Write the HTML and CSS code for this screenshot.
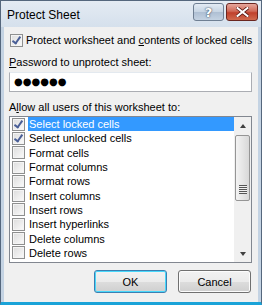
FILE: index.html
```html
<!DOCTYPE html>
<html lang="en">
<head>
    <meta charset="UTF-8">
    <title>Protect Sheet</title>
    <link rel="stylesheet" href="styles.css">
</head>
<body>
    <div class="window">
        <div class="title-bar">
            <span class="title">Protect Sheet</span>
            <div class="caption-buttons">
                <button class="cap-btn help-btn">?</button>
                <button class="cap-btn close-btn">
                    <svg width="13" height="10" viewBox="0 0 13 10">
                        <path d="M1.5 1 L11.5 9 M11.5 1 L1.5 9" stroke="#5a1a14" stroke-width="3.6" stroke-linecap="square"/>
                        <path d="M1.5 1 L11.5 9 M11.5 1 L1.5 9" stroke="#ffffff" stroke-width="2" stroke-linecap="square"/>
                    </svg>
                </button>
            </div>
        </div>
        <div class="content">
            <label class="check-row top-check">
                <span class="box checked"></span>
                <span>Protect worksheet and <u>c</u>ontents of locked cells</span>
            </label>
            <div class="field-label"><u>P</u>assword to unprotect sheet:</div>
            <div class="password">&#9679;&#9679;&#9679;&#9679;&#9679;&#9679;</div>
            <div class="field-label">A<u>l</u>low all users of this worksheet to:</div>
            <div class="listbox">
                <div class="items">
                    <div class="item selected"><span class="box checked"></span><span class="text">Select locked cells</span></div>
                    <div class="item"><span class="box checked"></span><span class="text">Select unlocked cells</span></div>
                    <div class="item"><span class="box"></span><span class="text">Format cells</span></div>
                    <div class="item"><span class="box"></span><span class="text">Format columns</span></div>
                    <div class="item"><span class="box"></span><span class="text">Format rows</span></div>
                    <div class="item"><span class="box"></span><span class="text">Insert columns</span></div>
                    <div class="item"><span class="box"></span><span class="text">Insert rows</span></div>
                    <div class="item"><span class="box"></span><span class="text">Insert hyperlinks</span></div>
                    <div class="item"><span class="box"></span><span class="text">Delete columns</span></div>
                    <div class="item"><span class="box"></span><span class="text">Delete rows</span></div>
                </div>
                <div class="scrollbar">
                    <div class="arrow up"></div>
                    <div class="thumb"><span class="grip"></span></div>
                    <div class="track"></div>
                    <div class="arrow down"></div>
                </div>
            </div>
            <div class="buttons">
                <button class="dlg-btn default">OK</button>
                <button class="dlg-btn">Cancel</button>
            </div>
        </div>
    </div>
</body>
</html>
```

FILE: styles.css
```css
* {
    box-sizing: border-box;
}

body {
    margin: 0;
    width: 262px;
    height: 305px;
    background-color: #ffffff;
    font-family: "Liberation Sans", Arial, sans-serif;
    font-size: 11px;
    color: #000000;
    white-space: nowrap;
}

.window {
    width: 262px;
    height: 305px;
    background-color: #c4d3e3;
    border: 1px solid #55677d;
    border-bottom: 3px solid #1aa3d8;
    display: flex;
    flex-direction: column;
}

.title-bar {
    height: 26px;
    display: flex;
    align-items: flex-start;
    justify-content: space-between;
    padding: 2px 3px 0 6px;
    background: linear-gradient(#e4ebf3, #d5e0ec);
}

.title {
    font-size: 12px;
    margin-top: 5px;
    color: #000000;
}

.caption-buttons {
    display: flex;
    gap: 2px;
}

.cap-btn {
    height: 18px;
    border-radius: 3px;
    padding: 0;
    display: flex;
    align-items: center;
    justify-content: center;
}

.help-btn {
    width: 31px;
    border: 1px solid #6f7f93;
    background: linear-gradient(#e3ebf4 0%, #c6d4e3 50%, #aebfd3 51%, #c4d2e2 100%);
    color: #ffffff;
    font-family: "DejaVu Sans", sans-serif;
    font-weight: bold;
    font-size: 13px;
    text-shadow: 0 0 2px #3d4e63, 0 0 1px #3d4e63;
}

.close-btn {
    width: 32px;
    border: 1px solid #6a2620;
    background: linear-gradient(#e6a79c 0%, #d06a58 45%, #c0402b 55%, #d06a4e 100%);
}

.content {
    flex: 1;
    margin: 0 3px 0 3px;
    background-color: #f0f0f0;
    padding: 6px 6px 0 5px;
    display: flex;
    flex-direction: column;
}

.box {
    width: 13px;
    height: 13px;
    flex: none;
    border: 1px solid #8e8f8f;
    background: linear-gradient(135deg, #dcdcdc, #fbfbfb);
    box-shadow: inset 0 0 0 1px #f4f4f4;
    position: relative;
}

.box.checked::after {
    content: "";
    position: absolute;
    left: 3px;
    top: 0px;
    width: 3px;
    height: 7px;
    border-right: 2px solid #4a5f97;
    border-bottom: 2px solid #4a5f97;
    transform: rotate(35deg);
}

.check-row {
    display: flex;
    align-items: center;
    gap: 3px;
    margin-left: 1px;
    height: 14px;
}

.field-label {
    margin-top: 7px;
    height: 16px;
    line-height: 16px;
}

.password {
    margin-top: 2px;
    height: 20px;
    border: 1px solid #abadb3;
    border-top-color: #e3e9ef;
    background-color: #ffffff;
    padding-left: 4px;
    font-size: 10px;
    line-height: 18px;
    font-family: "DejaVu Sans", sans-serif;
}

.listbox {
    margin-top: 1px;
    height: 147px;
    border: 1px solid #828790;
    background-color: #ffffff;
    display: flex;
}

.items {
    flex: 1;
}

.item {
    height: 14.3px;
    display: flex;
    align-items: center;
    padding-left: 2px;
}

.item .text {
    margin-left: 3px;
    padding: 0 1px;
    flex: 1;
    line-height: 14px;
}

.item.selected .text {
    background-color: #3399ff;
    color: #ffffff;
}

.scrollbar {
    width: 17px;
    display: flex;
    flex-direction: column;
    background-color: #f0f0f0;
    border-left: 1px solid #f0f0f0;
}

.arrow {
    height: 17px;
    position: relative;
}

.arrow::after {
    content: "";
    position: absolute;
    left: 5px;
    border-left: 3.5px solid transparent;
    border-right: 3.5px solid transparent;
}

.arrow.up::after {
    top: 7px;
    border-bottom: 4px solid #404040;
}

.arrow.down::after {
    top: 7px;
    border-top: 4px solid #404040;
}

.thumb {
    height: 66px;
    margin: 1px 1px 0 0;
    border: 1px solid #959595;
    border-radius: 2px;
    background: linear-gradient(90deg, #f3f3f3, #e6e6e6 50%, #d8d8d8);
    display: flex;
    align-items: flex-end;
    justify-content: center;
    padding-bottom: 6px;
}

.grip {
    width: 8px;
    height: 9px;
    background: repeating-linear-gradient(#555555 0, #555555 1px, #f0f0f0 1px, #f0f0f0 2px);
}

.track {
    flex: 1;
}

.buttons {
    display: flex;
    justify-content: flex-end;
    gap: 11px;
    margin-top: 7px;
    padding-right: 1px;
}

.dlg-btn {
    width: 73px;
    height: 23px;
    border: 1px solid #707070;
    border-radius: 3px;
    background: linear-gradient(#f2f2f2 0%, #ebebeb 50%, #dddddd 51%, #cfcfcf 100%);
    font-family: "Liberation Sans", Arial, sans-serif;
    font-size: 11px;
    color: #000000;
    padding: 0;
    box-shadow: inset 0 0 0 1px #fcfcfc;
}

.dlg-btn.default {
    border-color: #3c7fb1;
    box-shadow: inset 0 0 0 1px #48d8fb;
}
```
